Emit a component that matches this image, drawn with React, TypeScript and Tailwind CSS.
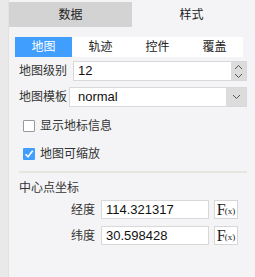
const cn = "font-['Liberation_Sans','Noto_Sans_CJK_SC',sans-serif]";

function Chevron({ up }: { up?: boolean }) {
  return (
    <svg width="9" height="6" viewBox="0 0 9 6" className="block">
      <path
        d={up ? "M1 5 L4.5 1.5 L8 5" : "M1 1 L4.5 4.5 L8 1"}
        fill="none"
        stroke="#555"
        strokeWidth="1"
      />
    </svg>
  );
}

function Fx() {
  return (
    <div className="w-[24px] h-[19px] border border-[#d6d6d6] bg-white flex items-center justify-center font-['Liberation_Serif',serif] text-[#222] leading-none">
      <span className="text-[16px]">F</span>
      <span className="text-[9px] -ml-[1px] mt-[3px]">(x)</span>
    </div>
  );
}

function Check({ checked, label }: { checked?: boolean; label: string }) {
  return (
    <div className="flex items-center h-[12px] pl-[4px]">
      {checked ? (
        <div className="w-[12px] h-[12px] bg-[#409eff] rounded-[1px] flex items-center justify-center">
          <svg width="10" height="10" viewBox="0 0 10 10">
            <path d="M1.5 5.2 L4 7.8 L8.7 1.8" fill="none" stroke="white" strokeWidth="1.6" />
          </svg>
        </div>
      ) : (
        <div className="w-[12px] h-[12px] border border-[#9a9a9a] bg-white rounded-[1px]" />
      )}
      <span className="ml-[5px] text-[12px] text-[#333]">{label}</span>
    </div>
  );
}

export default function App() {
  const subTabs = ["地图", "轨迹", "控件", "覆盖"];
  return (
    <div className={`w-[255px] h-[277px] flex ${cn}`}>
      <div className="w-[9px] bg-[#e9e9e9] border-r border-[#e2e2e2]" />
      <div className="flex-1 bg-[#f4f4f6] pt-[2px] pr-[4px]">
        <div className="flex h-[25px] text-[12px] text-[#222]">
          <div className="w-[123px] bg-[#d3d3d3] flex items-center justify-center">数据</div>
          <div className="flex-1 flex items-center justify-center">样式</div>
        </div>

        <div className="ml-[6px] mt-[10px] w-[228px] h-[20px] flex bg-white text-[12px]">
          {subTabs.map((t, i) => (
            <div
              key={t}
              className={`w-[57px] flex items-center justify-center ${
                i === 0 ? "bg-[#409eff] text-white" : "text-[#222]"
              }`}
            >
              {t}
            </div>
          ))}
        </div>

        <div className="pl-[10px] pr-[4px]">
          <div className="flex items-center mt-[4px] h-[20px]">
            <span className="w-[54px] text-[12px] text-[#333]">地图级别</span>
            <div className="flex-1 h-[20px] flex bg-white border border-[#d8d8d8]">
              <span className="flex-1 pl-[4px] text-[13px] leading-[18px] text-[#111]">12</span>
              <div className="w-[15px] bg-[#dcdcdc] flex flex-col items-center justify-center gap-[3px]">
                <Chevron up />
                <Chevron />
              </div>
            </div>
          </div>

          <div className="flex items-center mt-[6px] h-[20px]">
            <span className="w-[50px] text-[12px] text-[#333]">地图模板</span>
            <div className="flex-1 h-[20px] flex bg-white border border-[#d8d8d8]">
              <span className="flex-1 pl-[8px] text-[13px] leading-[18px] text-[#111]">normal</span>
              <div className="w-[20px] bg-[#dcdcdc] flex items-center justify-center">
                <Chevron />
              </div>
            </div>
          </div>

          <div className="mt-[13px]">
            <Check label="显示地标信息" />
          </div>
          <div className="mt-[16px]">
            <Check checked label="地图可缩放" />
          </div>

          <div className="mt-[11px] h-[2px] bg-[#e6e5df]" />

          <div className="mt-[8px] text-[12px] text-[#333] leading-[14px]">中心点坐标</div>

          <div className="flex items-center mt-[5px] h-[19px]">
            <span className="w-[82px] pr-[6px] text-right text-[12px] text-[#333]">经度</span>
            <div className="w-[108px] h-[19px] bg-white border border-[#d8d8d8] pl-[4px] text-[13px] leading-[17px] text-[#111]">
              114.321317
            </div>
            <div className="ml-[5px]">
              <Fx />
            </div>
          </div>

          <div className="flex items-center mt-[7px] h-[19px]">
            <span className="w-[82px] pr-[6px] text-right text-[12px] text-[#333]">纬度</span>
            <div className="w-[108px] h-[19px] bg-white border border-[#d8d8d8] pl-[4px] text-[13px] leading-[17px] text-[#111]">
              30.598428
            </div>
            <div className="ml-[5px]">
              <Fx />
            </div>
          </div>
        </div>
      </div>
    </div>
  );
}
